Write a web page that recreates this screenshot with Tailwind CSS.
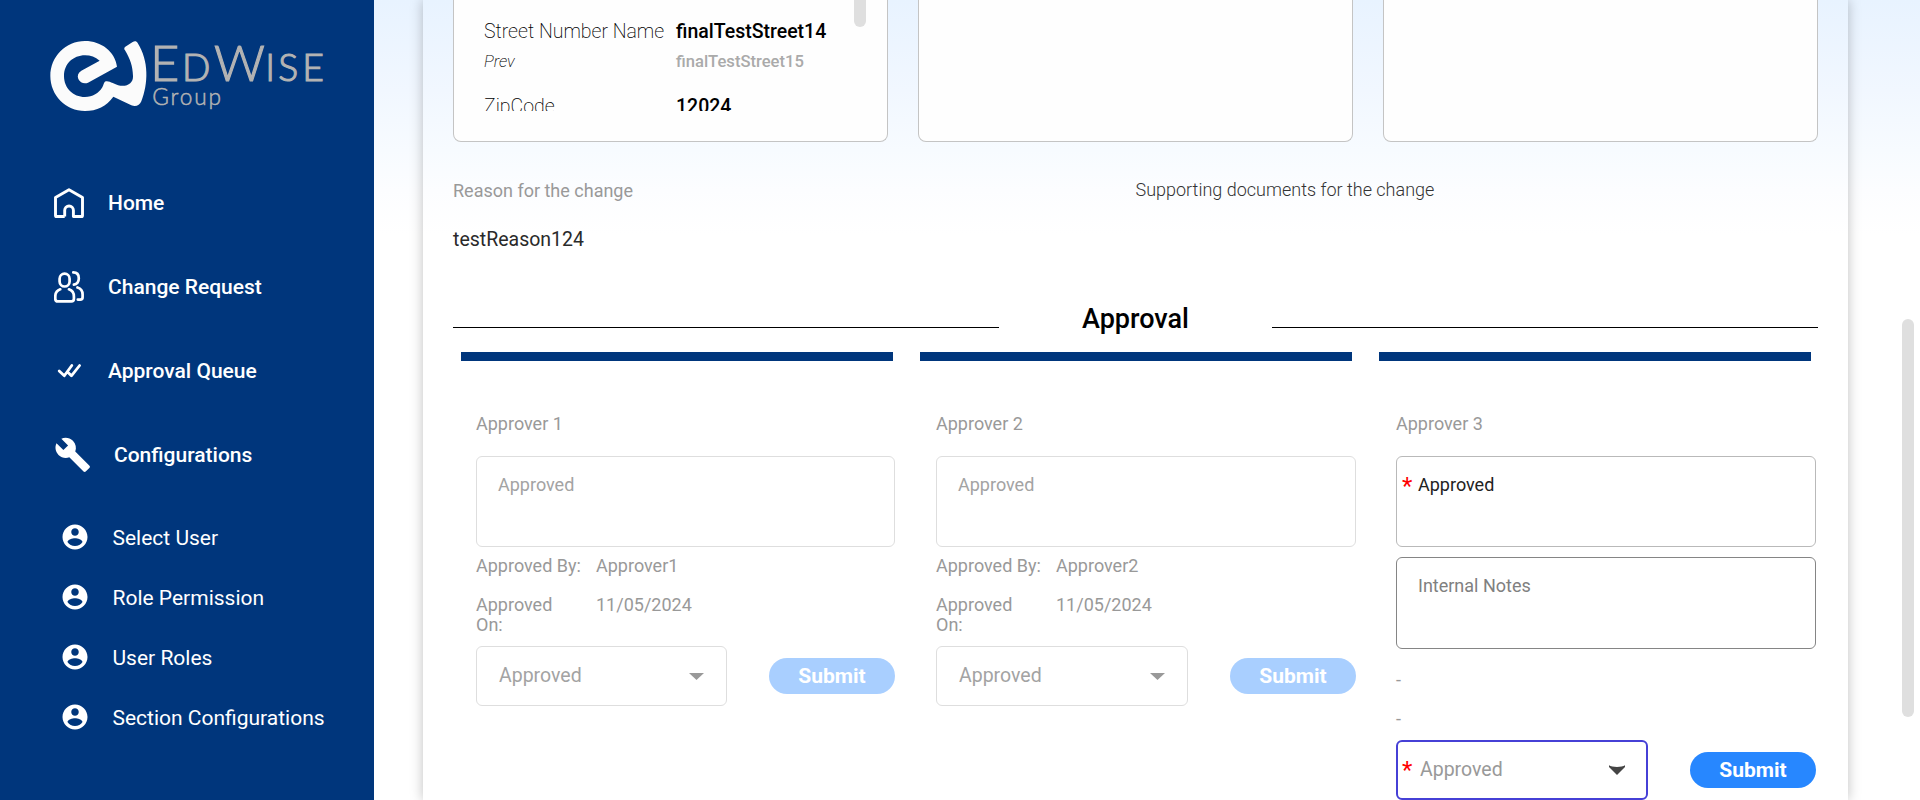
<!DOCTYPE html>
<html lang="en">
<head>
<meta charset="utf-8">
<title>EdWise Group - Approval</title>
<script src="https://cdn.jsdelivr.net/npm/@tailwindcss/browser@4"></script>
</head>
<body class="h-[800px] overflow-hidden bg-white font-['Roboto',sans-serif] text-lg">
<svg class="hidden">
  <symbol id="user" viewBox="0 0 24 24"><path fill="currentColor" d="M12 2C6.48 2 2 6.48 2 12s4.48 10 10 10 10-4.48 10-10S17.52 2 12 2zm0 3c1.66 0 3 1.34 3 3s-1.34 3-3 3-3-1.34-3-3 1.34-3 3-3zm0 14.2c-2.5 0-4.71-1.28-6-3.22.03-1.99 4-3.08 6-3.08 1.99 0 5.97 1.09 6 3.08-1.29 1.94-3.5 3.22-6 3.22z"/></symbol>
</svg>
<div class="relative flex h-[800px] w-[1920px] overflow-hidden">
  <aside class="h-full w-[374px] shrink-0 bg-[#00367c] text-[21px] text-white">
    <div class="h-[161px] pt-[40px] pl-[50px]">
      <svg class="h-[72px] w-[276px] overflow-visible" viewBox="150 120 828 216">
        <path fill="#fbfbfb" d="M351 200C345 155 304 123 255 123C197 123 151 170 151 228S197 333 255 333C290 333 320 318 340 290L394 316C407 322 419 316 424 304C445 250 447 183 413 129C410 123 404 122 398 126L376 140C372 143 372 147 375 151C391 178 398 198 399 228C400 249 383 260 361 257C342 254 330 242 318 244C311 246 312 254 307 262C296 280 278 291 255 291C219 291 192 264 192 228S219 166 255 166C272 166 286 171 299 182L244 212C234 218 231 227 235 237C240 248 253 253 264 248Z"/>
        <g fill="#b3b3b3" stroke="#b3b3b3" font-family="Lato" font-weight="300">
          <text y="244" stroke-width="3.5"><tspan x="451" font-size="150">E</tspan><tspan x="546" font-size="112">D</tspan><tspan x="642" font-size="150">W</tspan><tspan x="796" font-size="112">I</tspan><tspan x="835" font-size="112">S</tspan><tspan x="907" font-size="112">E</tspan></text>
          <text x="457" y="315" font-size="68" textLength="206" stroke-width="1.5">Group</text>
        </g>
      </svg>
    </div>
    <nav>
      <a class="flex h-[84px] items-center pl-[54px] font-medium">
        <svg class="h-[30px] w-[30px]" viewBox="0 0 30 30" fill="none" stroke="#fff" stroke-width="2.9" stroke-linejoin="round"><path d="M10.7 28.5H2.6Q1.5 28.5 1.5 27.4V9.5L15 1.7 28.5 9.5V27.4Q28.5 28.5 27.4 28.5H19.4V22.3a4.35 4.35 0 0 0-8.7 0V28.5"/></svg>
        <span class="ml-6">Home</span></a>
      <a class="flex h-[84px] items-center pl-[54px] font-medium">
        <svg class="h-[32px] w-[30px]" viewBox="0 0 30 32" fill="none" stroke="#fff" stroke-width="2.7" stroke-linecap="round"><rect x="5.6" y="2.7" width="10" height="12.8" rx="5"/><path d="M6.2 18.3C3 19.4 1.3 22.2 1.3 25.5V27.8Q1.3 30.4 3.9 30.4H17.3Q19.9 30.4 19.9 27.8V25.5C19.9 22.2 18.2 19.4 15 18.3M19.3 1.4C23 1.4 24.8 4 24.8 7.3S23 13.4 19.9 13.6M23.5 16.5C26.8 17.5 28.6 20 28.6 23.5V26.2Q28.6 28.6 26.2 28.6H23.8"/></svg>
        <span class="ml-6">Change Request</span></a>
      <a class="flex h-[84px] items-center pl-[54px] font-medium">
        <svg class="h-[30px] w-[30px]" viewBox="0 0 30 30" fill="none" stroke="#fff" stroke-width="2.8" stroke-linecap="round" stroke-linejoin="round"><path d="M5.2 15 10.3 19.8 17.8 9.5M14.6 17 17.4 19.8 25.6 9.5"/></svg>
        <span class="ml-6">Approval Queue</span></a>
      <a class="flex h-[84px] items-center pl-[53.5px] font-medium">
        <svg class="h-[37.5px] w-[37.5px]" viewBox="0 0 24 24"><path fill="#fff" d="M22.7 19l-9.1-9.1c.9-2.3.4-5-1.5-6.9-2-2-5-2.4-7.4-1.3L9 6 6 9 1.6 4.7C.4 7.1.9 10.1 2.9 12.1c1.9 1.9 4.6 2.4 6.9 1.5l9.1 9.1c.4.4 1 .4 1.4 0l2.3-2.3c.5-.4.5-1.1.1-1.4z"/></svg>
        <span class="ml-[23px]">Configurations</span></a>
      <div class="mt-[11px]">
        <a class="flex h-[60px] items-center pl-[59.5px]"><svg class="mb-[3px] h-[30px] w-[30px]"><use href="#user"/></svg><span class="ml-[23px]">Select User</span></a>
        <a class="flex h-[60px] items-center pl-[59.5px]"><svg class="mb-[3px] h-[30px] w-[30px]"><use href="#user"/></svg><span class="ml-[23px]">Role Permission</span></a>
        <a class="flex h-[60px] items-center pl-[59.5px]"><svg class="mb-[3px] h-[30px] w-[30px]"><use href="#user"/></svg><span class="ml-[23px]">User Roles</span></a>
        <a class="flex h-[60px] items-center pl-[59.5px]"><svg class="mb-[3px] h-[30px] w-[30px]"><use href="#user"/></svg><span class="ml-[23px]">Section Configurations</span></a>
      </div>
    </nav>
  </aside>

  <main class="h-full flex-1 bg-[linear-gradient(#e8f3ff_0px,#f1f7ff_90px,#f7fbff_150px,#fcfdff_190px,#ffffff_235px)] pl-[49px]">
    <div class="h-full w-[1425px] px-[30px] shadow-[0_0_12px_rgba(0,0,0,0.25)]">
      <section class="grid h-[142px] grid-cols-3 gap-[30px]">
        <div class="relative rounded-b-lg border border-t-0 border-[#c4c4c4] bg-[#fefefe] pl-[30px]">
          <div class="grid h-[111px] grid-cols-[192px_1fr] grid-rows-[20px_36px_24px_50px] content-start overflow-hidden text-[19.5px] text-black">
            <span class="row-start-2 pt-[2px] leading-[20px] font-[200]">Street Number Name</span><span class="row-start-2 pt-[2px] leading-[20px] font-medium">finalTestStreet14</span>
            <span class="row-start-3 text-[16.6px] leading-[11px] font-[200] italic">Prev</span><span class="row-start-3 text-[16.6px] leading-[11px] font-medium text-[#aaa]">finalTestStreet15</span>
            <span class="row-start-4 pt-[17px] leading-[20px] font-[200]">ZipCode</span><span class="row-start-4 pt-[17px] leading-[20px] font-medium">12024</span>
          </div>
          <div class="absolute top-0 right-[21px] h-[27px] w-3 rounded-b-full bg-[#dfdfdf]"></div>
        </div>
        <div class="rounded-b-lg border border-t-0 border-[#c4c4c4] bg-[#fefefe]"></div>
        <div class="rounded-b-lg border border-t-0 border-[#c4c4c4] bg-[#fefefe]"></div>
      </section>

      <section class="grid h-[144px] grid-cols-2 pt-[38px]">
        <div>
          <div class="leading-[22px] text-[#999]">Reason for the change</div>
          <div class="mt-[26px] text-[19.5px] leading-6 text-[#2a2a2a]">testReason124</div>
        </div>
        <div class="leading-5 font-light text-[#333]">Supporting documents for the change</div>
      </section>

      <div class="flex h-[66px] items-start">
        <div class="mt-[41px] h-px flex-2 bg-black"></div>
        <h2 class="flex-1 pt-[17px] text-center text-[27px] leading-8 font-medium text-black">Approval</h2>
        <div class="mt-[41px] h-px flex-2 bg-black"></div>
      </div>

      <div class="flex gap-[27px] pl-2">
        <div class="h-[9px] w-[432px] bg-[#00367c]"></div>
        <div class="h-[9px] w-[432px] bg-[#00367c]"></div>
        <div class="h-[9px] w-[432px] bg-[#00367c]"></div>
      </div>

      <section class="grid grid-cols-[420px_420px_420px] gap-x-[40px] pt-[53px] pl-[23px] leading-5 text-[#999]">
        <div class="mr-px">
          <div>Approver 1</div>
          <div class="mt-[22px] h-[91px] rounded-md border border-[#dedede] px-[21px] py-[18px] text-[#a3a3a3]">Approved</div>
          <div class="mt-[9px] grid grid-cols-[120px_1fr] gap-y-[19px]">
            <span>Approved By:</span><span>Approver1</span>
            <span class="w-[100px]">Approved On:</span><span>11/05/2024</span>
          </div>
          <div class="mt-[11px] flex items-center justify-between">
            <div class="flex h-[60px] w-[251px] items-center justify-between rounded-md border border-[#dedede] px-[22px] text-[19.5px] text-[#a3a3a3]"><span>Approved</span><svg class="h-[7px] w-[15px]" viewBox="0 0 15 7"><path fill="#999" d="M0 0H15L7.5 7Z"/></svg></div>
            <button class="h-9 w-[126px] rounded-full bg-[#a9cfff] text-[21px] font-bold text-white">Submit</button>
          </div>
        </div>
        <div>
          <div>Approver 2</div>
          <div class="mt-[22px] h-[91px] rounded-md border border-[#dedede] px-[21px] py-[18px] text-[#a3a3a3]">Approved</div>
          <div class="mt-[9px] grid grid-cols-[120px_1fr] gap-y-[19px]">
            <span>Approved By:</span><span>Approver2</span>
            <span class="w-[100px]">Approved On:</span><span>11/05/2024</span>
          </div>
          <div class="mt-[11px] flex items-center justify-between">
            <div class="flex h-[60px] w-[252px] items-center justify-between rounded-md border border-[#dedede] px-[22px] text-[19.5px] text-[#a3a3a3]"><span>Approved</span><svg class="h-[7px] w-[15px]" viewBox="0 0 15 7"><path fill="#999" d="M0 0H15L7.5 7Z"/></svg></div>
            <button class="h-9 w-[126px] rounded-full bg-[#a9cfff] text-[21px] font-bold text-white">Submit</button>
          </div>
        </div>
        <div>
          <div>Approver 3</div>
          <div class="relative mt-[22px] h-[91px] rounded-md border border-[#b9b9b9] px-[21px] py-[18px] text-[#222]"><span class="absolute top-[13px] left-[5px] text-2xl leading-8 text-[#f00]">*</span>Approved</div>
          <div class="mt-[10px] h-[92px] rounded-md border border-[#858585] px-[21px] py-[18px] text-[#808080]">Internal Notes</div>
          <div class="mt-[21px]">-</div>
          <div class="mt-[19px]">-</div>
          <div class="mt-[11px] flex items-center justify-between">
            <div class="relative flex h-[60px] w-[252px] items-center justify-between rounded-md border-2 border-[#4640d6] pr-[21px] pl-[22px] text-[19.5px] text-[#999]"><span class="absolute top-[12px] left-[4px] text-2xl leading-8 text-[#f00]">*</span><span>Approved</span><svg class="h-[10px] w-[16px]" viewBox="0 0 16 10"><path fill="#444" d="M0 .3C3 2.4 13 2.4 16 .3V2L8 10 0 2Z"/></svg></div>
            <button class="h-9 w-[126px] rounded-full bg-[#2787ff] text-[21px] font-bold text-white">Submit</button>
          </div>
        </div>
      </section>
    </div>
  </main>
  <div class="absolute top-[319px] left-[1902px] h-[398px] w-3 rounded-full bg-[#dfdfdf]"></div>
</div>
</body>
</html>
